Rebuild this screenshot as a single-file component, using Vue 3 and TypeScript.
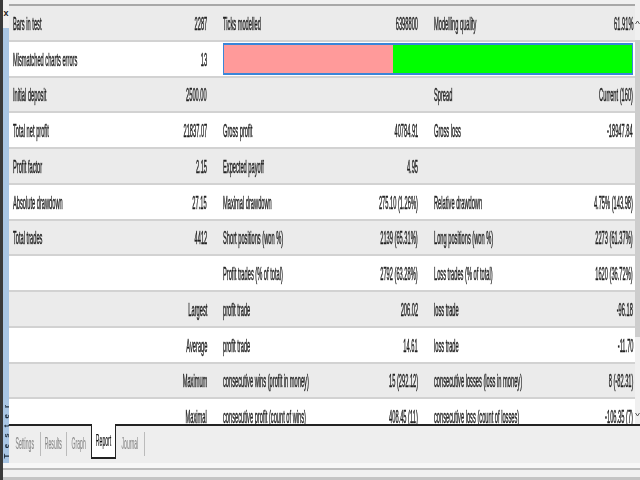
<script setup lang="ts">
// six columns per row; empty string = empty cell
const rows: string[][] = [
  ['Bars in test', '2287', 'Ticks modelled', '6398800', 'Modelling quality', '61.91%'],
  ['Mismatched charts errors', '13'],
  ['Initial deposit', '2500.00', '', '', 'Spread', 'Current (160)'],
  ['Total net profit', '21837.07', 'Gross profit', '40784.91', 'Gross loss', '-18947.84'],
  ['Profit factor', '2.15', 'Expected payoff', '4.95', '', ''],
  ['Absolute drawdown', '27.15', 'Maximal drawdown', '275.10 (1.26%)', 'Relative drawdown', '4.75% (143.98)'],
  ['Total trades', '4412', 'Short positions (won %)', '2139 (65.31%)', 'Long positions (won %)', '2273 (61.37%)'],
  ['', '', 'Profit trades (% of total)', '2792 (63.28%)', 'Loss trades (% of total)', '1620 (36.72%)'],
  ['', 'Largest', 'profit trade', '206.02', 'loss trade', '-96.18'],
  ['', 'Average', 'profit trade', '14.61', 'loss trade', '-11.70'],
  ['', 'Maximum', 'consecutive wins (profit in money)', '15 (292.12)', 'consecutive losses (loss in money)', '8 (-82.31)'],
  ['', 'Maximal', 'consecutive profit (count of wins)', '408.45 (11)', 'consecutive loss (count of losses)', '-106.35 (7)'],
];

const tabs = ['Settings', 'Results', 'Graph', 'Report', 'Journal'];
</script>

<template>
  <div class="window">
    <div class="main">
      <aside class="side">
        <span class="close">x</span>
        <span class="side-title">Tester</span>
      </aside>
      <div class="content">
        <div class="report">
          <div class="table">
            <div v-for="(row, r) in rows" :key="r" class="row" :class="{ odd: r % 2 === 1 }">
              <div v-for="(text, c) in row" :key="c" class="cell">
                <span class="txt">{{ text }}</span>
              </div>
              <div v-if="r === 1" class="quality">
                <div class="bad" />
                <div class="good" />
              </div>
            </div>
          </div>
          <div class="scrollbar">
            <div class="btn">
              <svg width="5" height="5" viewBox="0 0 5 5"><path d="M0.5 4 L2.5 1 L4.5 4" fill="none" stroke="#555" /></svg>
            </div>
            <div class="thumb" />
            <div class="spacer" />
            <div class="btn last">
              <svg width="5" height="5" viewBox="0 0 5 5"><path d="M0.5 1 L2.5 4 L4.5 1" fill="none" stroke="#555" /></svg>
            </div>
          </div>
        </div>
        <div class="tabs">
          <div v-for="t in tabs" :key="t" class="tab" :class="{ active: t === 'Report' }">
            <span class="txt">{{ t }}</span>
          </div>
        </div>
      </div>
    </div>
    <div class="statusbar" />
  </div>
</template>

<style>
html, body {
  margin: 0;
  background: #f0f0f0;
}
</style>

<style scoped>
.window {
  width: 640px;
  height: 480px;
  box-sizing: border-box;
  border-left: 3px solid #3a3a3a;
  overflow: hidden;
  display: flex;
  flex-direction: column;
  background: #f7f7f7;
  font-family: "Liberation Sans", Arial, sans-serif;
  font-size: 19px;
  color: #222;
}
.main {
  height: 463px;
  flex: none;
  display: flex;
  background: #f0f0f0;
}
.side {
  width: 6px;
  flex: none;
  background: #a9c6e4;
  display: flex;
  flex-direction: column;
  justify-content: space-between;
  align-items: center;
}
.close {
  height: 28px;
  width: 100%;
  box-sizing: border-box;
  padding-top: 8px;
  background: #f0f0f0;
  font-size: 9px;
  font-weight: bold;
  line-height: 10px;
  text-align: center;
}
.side-title {
  writing-mode: vertical-rl;
  transform: rotate(180deg);
  font-size: 8px;
  font-weight: bold;
  letter-spacing: 6px;
  margin-bottom: 5px;
  color: #1b2a3a;
  filter: blur(0.3px);
}
.content {
  flex: 1;
  min-width: 0;
  display: flex;
  flex-direction: column;
}
.report {
  height: 424px;
  flex: none;
  display: flex;
  overflow: hidden;
  box-sizing: border-box;
  padding-top: 4px;
}
.table {
  flex: 1;
  min-width: 0;
}
.row {
  position: relative;
  height: 35.75px;
  box-sizing: border-box;
  border-top: 2px solid #d2d2d2;
  background: #ebebeb;
  display: grid;
  grid-template-columns: 148px 50px 120px 91px 120px 95px;
}
.row:first-child {
  border-top-color: #a8a8a8;
}
.row.odd {
  background: #fff;
}
.cell {
  display: flex;
  align-items: center;
  justify-content: flex-end;
  white-space: nowrap;
  min-width: 0;
  padding-top: 2px;
}
.cell:nth-child(odd) {
  justify-content: flex-start;
  padding-left: 16px;
}
.cell:first-child {
  padding-left: 4px;
}
.txt {
  display: inline-block;
  flex: none;
  transform: scaleX(0.3);
  transform-origin: left center;
  -webkit-text-stroke: 0.5px currentColor;
  filter: blur(0.5px);
}
.cell:nth-child(even) .txt {
  transform-origin: right center;
}
.quality {
  position: absolute;
  left: 214px;
  right: 2px;
  top: 1px;
  bottom: 1px;
  display: flex;
  border: 1px solid #3a86d8;
  border-width: 2px 1px;
}
.bad {
  width: 169px;
  background: #ff9a9a;
}
.good {
  flex: 1;
  background: #00ff00;
}
.scrollbar {
  width: 5px;
  flex: none;
  display: flex;
  flex-direction: column;
  background: #f0f0f0;
}
.btn {
  height: 36px;
  display: flex;
  align-items: center;
}
.btn.last {
  height: 20px;
}
.thumb {
  height: 297px;
  background: #cdcdcd;
}
.spacer {
  flex: 1;
}
.tabs {
  height: 39px;
  box-sizing: border-box;
  border-top: 2px solid #222;
  display: grid;
  grid-template-columns: 32px 26px 24px 25px 29px;
  align-items: start;
  background: #eeeeee;
  font-size: 17px;
}
.tab {
  height: 24px;
  margin-top: 6px;
  box-sizing: border-box;
  display: flex;
  align-items: center;
  justify-content: center;
  white-space: nowrap;
  min-width: 0;
  color: #8a8a8a;
  border-right: 1px solid #bbb;
}
.tab .txt {
  transform-origin: center;
  -webkit-text-stroke: 0.2px currentColor;
}
.tab.active {
  margin-top: -2px;
  height: 35px;
  color: #111;
  background: #fff;
  border: 1px solid #222;
  border-top: 0;
  border-bottom-width: 2px;
}
.tab:nth-child(3) {
  border-right: 0;
}
.statusbar {
  flex: none;
  margin-top: 5px;
  height: 12px;
  box-sizing: border-box;
  border-top: 2px solid #bcbcbc;
  border-bottom: 3px solid #c4c4c4;
  background: #f0f0f0;
}
</style>
